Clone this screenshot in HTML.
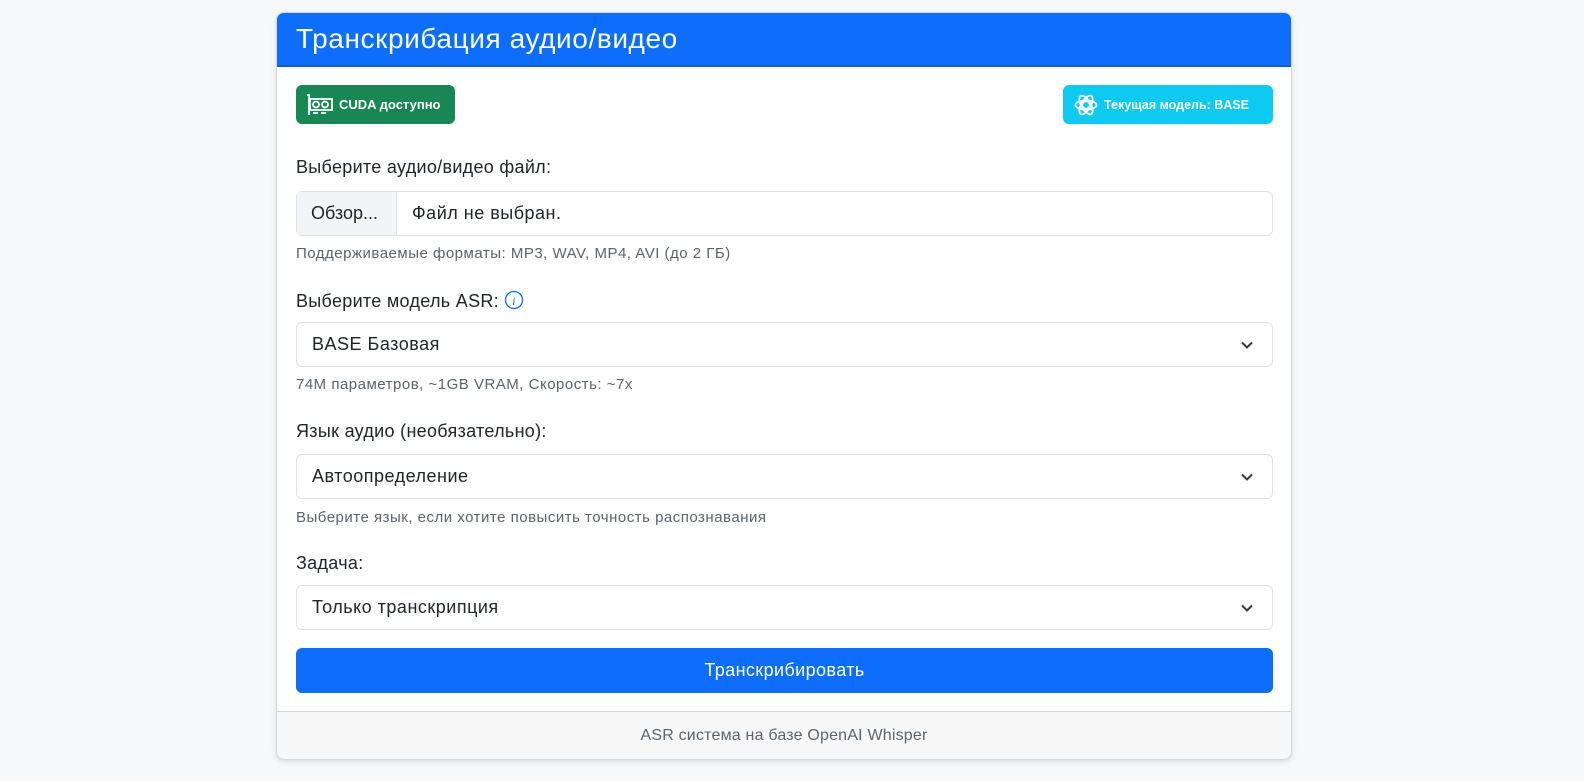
<!DOCTYPE html>
<html><head><meta charset="utf-8"><style>
*{box-sizing:border-box;margin:0;padding:0}
body{width:1584px;height:781px;background:#f8f9fa;font-family:"Liberation Sans",sans-serif;color:#212529;position:relative;overflow:hidden}
.card{position:absolute;left:276px;top:12px;width:1016px;height:748px;background:#fff;border:1px solid #d5d7da;border-radius:8px;box-shadow:0 2px 6px rgba(0,0,0,.12);overflow:hidden}
.hdr{height:54px;background:#0d6efd;color:#fff;font-size:28px;letter-spacing:.6px;padding:10px 0 0 19px;border-bottom:2px solid #0b5ed7}
.badge{position:absolute;top:72px;height:39px;border-radius:6px;color:#fff;font-weight:bold;font-size:13px;display:flex;align-items:center;padding:0 9px 0 9px;gap:4px}
.lbl{position:absolute;left:19px;font-size:18px;letter-spacing:.3px}
.help{position:absolute;left:19px;font-size:15px;letter-spacing:.5px;color:#5c636a}
.ctl{position:absolute;left:19px;width:977px;height:45px;border:1px solid #dee2e6;border-radius:6px;font-size:18px;letter-spacing:.5px;display:flex;align-items:center;padding-left:15px}
.chev{position:absolute;right:18px;top:15px}
.btn{position:absolute;left:19px;top:635px;width:977px;height:45px;background:#0d6efd;border-radius:6px;color:#fff;font-size:18px;letter-spacing:.4px;display:flex;align-items:center;justify-content:center}
.ftr{position:absolute;left:0;bottom:0;width:100%;height:48px;background:#f7f7f7;border-top:1px solid #d5d7da;font-size:16px;letter-spacing:.2px;color:#5c636a;text-align:center;padding-top:15px}
</style></head><body>
<div class="card">
<div class="hdr">Транскрибация аудио/видео</div>
<div class="badge" style="left:19px;width:159px;background:#198754">
<svg width="30" height="24" viewBox="0 0 30 24" fill="none" stroke="#fff" stroke-width="1.8"><path d="M2 2h2v20"/><rect x="5" y="6" width="22" height="11"/><circle cx="11" cy="11.5" r="3"/><circle cx="20" cy="11.5" r="3"/><path d="M8 20h5M16 20h5"/></svg>CUDA доступно</div>
<div class="badge" style="left:786px;width:210px;background:#0dcaf0;font-size:12.5px">
<svg width="28" height="28" viewBox="0 0 24 24" fill="none" stroke="#fff" stroke-width="1.5"><circle cx="12" cy="12" r="3.2"/><ellipse cx="12" cy="12" rx="9" ry="4"/><ellipse cx="12" cy="12" rx="9" ry="4" transform="rotate(60 12 12)"/><ellipse cx="12" cy="12" rx="9" ry="4" transform="rotate(120 12 12)"/></svg>Текущая модель: BASE</div>
<div class="lbl" style="top:144px">Выберите аудио/видео файл:</div>
<div class="ctl" style="top:178px;padding-left:0"><div style="width:100px;height:100%;background:#f3f4f5;border-right:1px solid #dee2e6;display:flex;align-items:center;padding-left:14px;letter-spacing:0">Обзор...</div><span style="margin-left:15px">Файл не выбран.</span></div>
<div class="help" style="top:232px">Поддерживаемые форматы: MP3, WAV, MP4, AVI (до 2 ГБ)</div>
<div class="lbl" style="top:277px">Выберите модель ASR: <svg width="20" height="20" viewBox="0 0 20 20" style="vertical-align:-3px"><circle cx="10" cy="10" r="8.5" fill="none" stroke="#0d6efd" stroke-width="1.3"/><text x="10" y="15" font-size="12" font-style="italic" fill="#0d6efd" text-anchor="middle" font-family="Liberation Serif">i</text></svg></div>
<div class="ctl" style="top:309px">BASE Базовая<svg class="chev" width="14" height="14" viewBox="0 0 14 14"><path d="M2 4.5l5 5 5-5" fill="none" stroke="#343a40" stroke-width="2"/></svg></div>
<div class="help" style="top:363px">74M параметров, ~1GB VRAM, Скорость: ~7x</div>
<div class="lbl" style="top:408px">Язык аудио (необязательно):</div>
<div class="ctl" style="top:441px">Автоопределение<svg class="chev" width="14" height="14" viewBox="0 0 14 14"><path d="M2 4.5l5 5 5-5" fill="none" stroke="#343a40" stroke-width="2"/></svg></div>
<div class="help" style="top:496px">Выберите язык, если хотите повысить точность распознавания</div>
<div class="lbl" style="top:540px">Задача:</div>
<div class="ctl" style="top:572px">Только транскрипция<svg class="chev" width="14" height="14" viewBox="0 0 14 14"><path d="M2 4.5l5 5 5-5" fill="none" stroke="#343a40" stroke-width="2"/></svg></div>
<div class="btn">Транскрибировать</div>
<div class="ftr">ASR система на базе OpenAI Whisper</div>
</div>
</body></html>
